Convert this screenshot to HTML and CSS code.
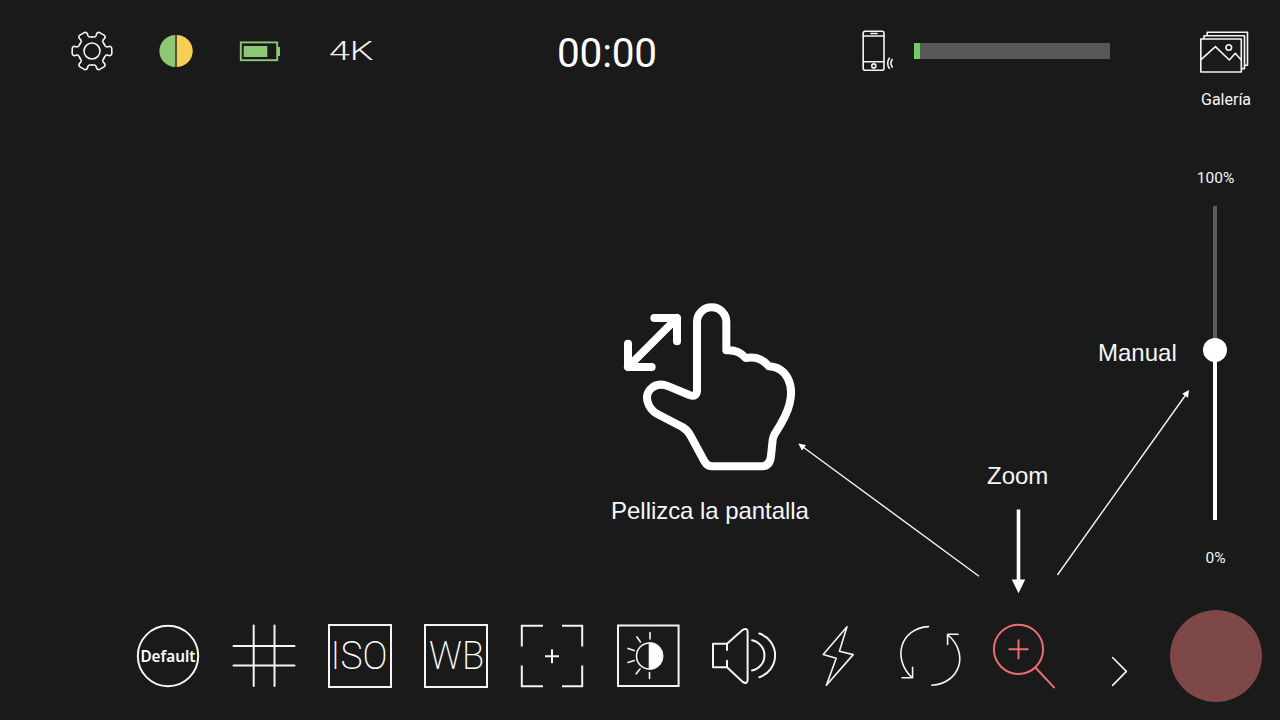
FILE: index.html
```html
<!DOCTYPE html>
<html lang="es">
<head>
<meta charset="utf-8">
<title>Cámara</title>
<link rel="stylesheet" href="styles.css">
</head>
<body>
<div class="screen">
  <main class="main">
    <header class="topbar">
      <svg class="gear line" viewBox="-22 -22 44 44">
        <defs><path id="tooth" d="M12.1-7L13.2-5.1Q13.9-3.9 15.2-4.1L16.6-4.5Q19.8-5.1 19.8-2V2Q19.8 5.1 16.6 4.5L15.2 4.1Q13.9 3.9 13.2 5.1L12.1 7"/></defs>
        <use href="#tooth"/><use href="#tooth" transform="rotate(60)"/><use href="#tooth" transform="rotate(120)"/>
        <use href="#tooth" transform="rotate(180)"/><use href="#tooth" transform="rotate(240)"/><use href="#tooth" transform="rotate(300)"/>
        <circle r="8"/>
      </svg>
      <svg class="tone" viewBox="0 0 34 34">
        <path class="green" d="M16.4 1A16 16 0 0 0 16.4 33Z"/><path class="yellow" d="M17.7 1A16 16 0 0 1 17.7 33Z"/>
      </svg>
      <svg class="battery" viewBox="239 40 42 21">
        <rect class="battery-case" x="240.8" y="41.4" width="36.4" height="17.8"/>
        <path class="green" d="M243.7 45H267.3V56H243.7ZM278 46H280V55H278Z"/>
      </svg>
      <svg class="res" viewBox="326 34 56 34"><text x="329" y="60.4" textLength="44.6" lengthAdjust="spacingAndGlyphs">4K</text></svg>
      <time class="timer">00:00</time>
      <svg class="phone line" viewBox="861 29 34 44">
        <rect x="863.2" y="31.2" width="20.8" height="39" rx="2"/>
        <path d="M863.2 36H884M863.2 61.7H884M871 33.5H877M889.3 58.2Q886 63 889.3 68.2M892.2 59.5Q889.6 63 892.2 67"/>
        <circle cx="873.8" cy="65.9" r="2"/>
      </svg>
      <div class="meter"><div class="meter-level"></div></div>
    </header>

    <section class="viewfinder">
      <figure class="gesture">
        <svg viewBox="30 30 600 525">
          <path d="M291 300V96A44 44 0 0 1 379 96V181C405 179 422 186 437 204C466 198 488 207 507 229C560 232 583 284 569 340C562 372 545 400 523 434Q519 442 518 450L513 498Q510 529 484 529H338Q322 529 314 515L271 436Q263 421 247 411L172 372C141 354 133 318 150 299C165 282 184 280 206 289L268 315Q291 323 291 300Z"/>
          <path d="M163 84H231V154M231 84L84 231M84 161V231H155"/>
        </svg>
        <figcaption>Pellizca la pantalla</figcaption>
      </figure>
    </section>

    <nav class="toolbar">
      <svg viewBox="120 608 96 96" class="line bold"><circle cx="168" cy="656" r="30.2"/><text class="t-default" x="140.4" y="661.6" textLength="55.2" lengthAdjust="spacingAndGlyphs">Default</text></svg>
      <svg viewBox="216 608 96 96" class="line bold"><path d="M253.7 625.5V686M274.5 625.5V686M233.5 646H294.5M233.5 665.6H294.5"/></svg>
      <svg viewBox="312 608 96 96" class="line bold"><path class="square" d="M329 625H391V687H329Z"/><text class="t-thin" x="330.6" y="669" textLength="56.8" lengthAdjust="spacingAndGlyphs">ISO</text></svg>
      <svg viewBox="408 608 96 96" class="line bold"><path class="square" d="M425 625H487V687H425Z"/><text class="t-thin" x="429" y="669" textLength="55" lengthAdjust="spacingAndGlyphs">WB</text></svg>
      <svg viewBox="504 608 96 96" class="line bold"><path class="square" d="M521.8 646.5V625.8H543M562 625.8H582.2V646.5M582.2 665.5V686.3H562M543 686.3H521.8V665.5M545 656.2H559M552 649.2V663.2"/></svg>
      <svg viewBox="600 608 96 96" class="line"><path class="square bold" d="M618 625.5H678.6V686H618Z"/><circle cx="649.5" cy="656" r="13"/><path class="solid" d="M649.5 643A13 13 0 0 1 649.5 669Z"/><path d="M650 632.5V639M649.5 672.5V678.5M636.8 636.8L640.4 642M628 648.4L634.2 650.6M628 662.4L634.3 660.6M636.2 673.8L640 669"/></svg>
      <svg viewBox="696 608 96 96" class="line bold"><path d="M727 650V643.7H713V667.3H727V660.8M727 643.7L742.8 629.8Q747.6 627.5 747.6 632V680Q747.6 684.5 742.8 682L727 667.3M752 640.2A15.5 15.5 0 0 1 752 670.6M759.3 633.5A23 23 0 0 1 759.3 677.2"/></svg>
      <svg viewBox="792 608 96 96" class="line"><path d="M847 626.8L823.2 654.4L836.2 658.3L826.4 685.3L853.2 654.6L839.4 651.3Z"/></svg>
      <svg viewBox="888 608 96 96" class="line"><path d="M928.5 626.6C900 628 892 659 912 677.5M902 677.8H912.6V667.3M931.8 685.3C961 683 969 653 948 635M958 634.2H947.6V644.5"/></svg>
      <svg viewBox="984 608 96 96" class="line bold coral"><circle cx="1018.5" cy="649.3" r="24.6"/><path d="M1009.3 649.3H1027.7M1018.5 640.2V658.6M1035.6 667.7L1054 687.4"/></svg>
      <svg viewBox="1080 608 96 96" class="line"><path d="M1112.6 657.5L1126.4 671.4L1112.6 685.4"/></svg>
    </nav>
  </main>

  <aside class="side">
    <div class="gallery">
      <svg class="line" viewBox="1198 29 54 46">
        <path d="M1200.8 39H1241.3V72H1200.8ZM1204 38V35.8H1244.5V68.6H1242M1207.2 35V32.3H1247.5V65.2H1245M1201 59.6L1215.4 46.7L1229.3 60L1235.3 53.3L1241 59.8"/>
        <circle cx="1228.8" cy="47.5" r="2.8"/>
      </svg>
      <span>Galería</span>
    </div>
    <div class="slider">
      <span>100%</span>
      <div class="track"><div class="fill"></div><div class="knob"></div></div>
      <span>0%</span>
    </div>
    <div class="record"></div>
  </aside>

  <svg class="arrows" viewBox="0 0 1280 720">
    <path class="thin" d="M979 576.2L803 447M1057.4 575L1186 394.5"/>
    <path class="thick" d="M1018.5 509.5V581"/>
    <path class="head" d="M798.3 443.5L806 445L802 450.5ZM1189 390L1188 397.8L1182.2 393.7ZM1011.8 579.5H1025.2L1018.5 593.3Z"/>
  </svg>
  <span class="note note-zoom">Zoom</span>
  <span class="note note-manual">Manual</span>
</div>
</body>
</html>
```
FILE: styles.css
```css
* { box-sizing: border-box; }
body { margin: 0; background: #1a1a1a; color: #f6f6f6; font-family: Roboto, sans-serif; }
svg { display: block; flex: none; }

.screen { position: relative; width: 1280px; height: 720px; overflow: hidden; display: grid; grid-template-columns: 1176px 104px; background: #1a1a1a; }
.main { display: grid; grid-template-rows: 102px 506px 112px; }

.line { fill: none; stroke: #f4f4f4; stroke-width: 1.6; stroke-linecap: round; stroke-linejoin: round; }
.bold { stroke-width: 2; }
.square { stroke-linecap: butt; stroke-linejoin: miter; }
.solid { fill: #fff; }
.coral { stroke: #ee6e6e; }
.green { fill: #8cc876; }
.yellow { fill: #f6d055; }

.topbar { display: flex; align-items: center; padding-left: 70px; }
.gear { width: 44px; height: 44px; }
.tone { width: 34px; height: 34px; margin-left: 45px; }
.battery { width: 42px; height: 21px; margin-left: 46px; }
.battery-case { fill: none; stroke: #8cc876; stroke-width: 1.9; }
.res { width: 56px; height: 34px; margin-left: 45px; }
.res text { font: 300 26px Roboto, sans-serif; fill: #f0f0f0; }
.timer { width: 104px; margin: 3px 0 0 173px; font-size: 40.5px; line-height: 48px; text-align: center; letter-spacing: -0.2px; color: #fff; }
.phone { width: 34px; height: 44px; margin-left: 202px; }
.meter { width: 196px; height: 16px; margin-left: 19px; background: #575757; }
.meter-level { width: 6px; height: 100%; background: #6fcb68; }

.viewfinder { padding: 198px 0 0 610px; }
.gesture { width: 200px; margin: 0; }
.gesture svg { width: 200px; height: 175px; fill: none; stroke: #fff; stroke-width: 24; stroke-linecap: round; stroke-linejoin: round; }
.gesture figcaption { margin-top: 22px; font: 24px/28px "Liberation Sans", sans-serif; letter-spacing: -0.05px; text-align: center; white-space: nowrap; }

.toolbar { display: flex; padding-left: 120px; }
.toolbar svg { width: 96px; height: 96px; }
.toolbar text { fill: #fff; stroke: none; }
.t-default { font: 600 16.5px "Noto Sans", "Open Sans", sans-serif; }
.t-thin { font: 200 38px Roboto, sans-serif; }

.side { display: flex; flex-direction: column; }
.gallery { height: 168px; padding: 29px 0 0 22px; font-size: 16px; line-height: 20px; }
.gallery svg { width: 54px; height: 46px; }
.gallery span { display: block; margin: 15px 0 0 3px; }
.slider { width: 79px; height: 442px; display: flex; flex-direction: column; align-items: center; font-size: 15.5px; line-height: 20px; }
.track { position: relative; width: 5px; height: 314px; margin: 18px 0 28px; display: flex; align-items: flex-end; background: #5c5c5c; background-clip: content-box; padding-right: 1px; }
.fill { width: 4px; height: 170px; background: #fff; }
.knob { position: absolute; left: -10px; top: 132px; width: 24px; height: 24px; border-radius: 50%; background: #fff; }
.record { width: 92px; height: 92px; margin-left: -6px; border-radius: 50%; background: #7f4848; }

.arrows { position: absolute; inset: 0; width: 1280px; height: 720px; pointer-events: none; }
.thin { stroke: #f4f4f4; stroke-width: 1.4; }
.thick { stroke: #fff; stroke-width: 3.6; }
.head { fill: #fff; }
.note { position: absolute; font: 24px/28px "Liberation Sans", sans-serif; }
.note-zoom { left: 987px; top: 462px; }
.note-manual { left: 1098px; top: 339px; }
```
